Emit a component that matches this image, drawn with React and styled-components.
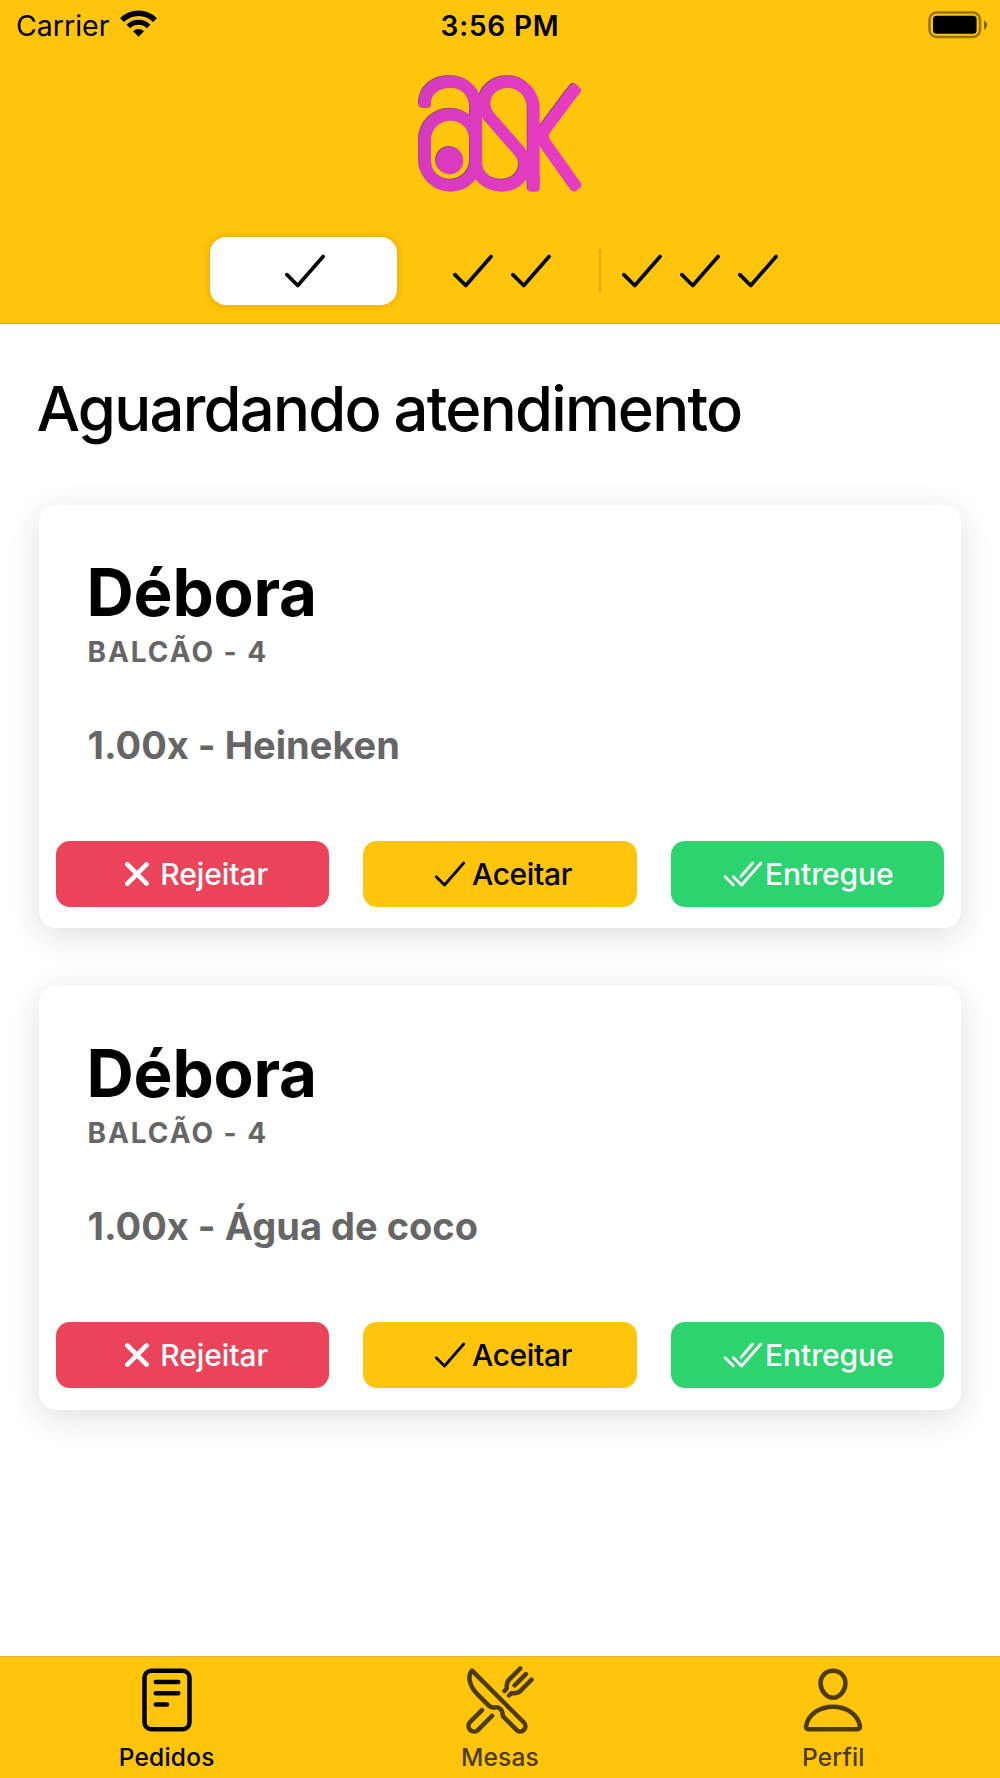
import React from "react";
import styled, { createGlobalStyle } from "styled-components";
import {
  IoCheckmarkOutline,
  IoCheckmarkDoneOutline,
  IoPersonOutline,
  IoReaderOutline,
  IoRestaurantOutline,
} from "react-icons/io5";

const orders = [
  { id: 1, customer: "Débora", table: "BALCÃO - 4", item: "1.00x - Heineken" },
  { id: 2, customer: "Débora", table: "BALCÃO - 4", item: "1.00x - Água de coco" },
];

const Wifi = () => (
  <svg width="37" height="27" viewBox="0 0 111 81">
    <g fill="none" stroke="#000">
      <path d="M6 30.5A70 70 0 0 1 105 30.5" strokeWidth="16.5" />
      <path d="M25 49.5A43 43 0 0 1 86 49.5" strokeWidth="15.5" />
    </g>
    <path d="M39 64A23 23 0 0 1 72 64L55.5 80z" />
  </svg>
);

const Battery = () => (
  <svg width="60" height="28" viewBox="0 0 60 28">
    <rect x="1.5" y="1.5" width="50.5" height="24.5" rx="7" fill="none" stroke="#000" strokeOpacity="0.4" strokeWidth="2.6" />
    <rect x="5" y="4.8" width="43.6" height="18" rx="3.5" />
    <path d="M56 9.5Q59 11 59 14T56 18.7z" fillOpacity="0.5" />
  </svg>
);

const AskLogo = () => (
  <LogoSvg width="200" height="140" viewBox="0 0 600 420">
    <defs>
      <linearGradient id="pink" gradientUnits="userSpaceOnUse" x1="60" y1="0" x2="540" y2="0">
        <stop offset="0" stopColor="#d63abf" />
        <stop offset="1" stopColor="#e83cc2" />
      </linearGradient>
    </defs>
    <g fill="none" stroke="url(#pink)" strokeWidth="36">
      <path d="M75 126C75 90 106 63 150 63C196 63 228 95 228 140V300" />
      <rect x="75" y="161" width="153" height="213" rx="76" />
      <path d="M401 374V142A78 79 0 0 0 323 63C285 63 253 90 253 127C253 145 260 158 270 170L358 270C370 284 375 296 375 310C375 347 345 374 304 374C262 374 228 345 228 300V140" />
      <path d="M515 98L435 205Q422 226 435 246L516 360" />
    </g>
    <g fill="url(#pink)">
      <rect x="57" y="112" width="36" height="29" rx="11" />
      <rect x="383" y="340" width="36" height="52" rx="10" />
      <circle cx="149" cy="299" r="41" />
    </g>
    <g fill="#e63cc2">
      <rect x="-40" y="-18" width="40" height="36" rx="11" transform="translate(533 75) rotate(-53.3)" />
      <rect x="-40" y="-18" width="40" height="36" rx="11" transform="translate(534 385) rotate(54.5)" />
    </g>
  </LogoSvg>
);

const CloseIcon = () => (
  <svg width="24" height="24" viewBox="0 0 24 24">
    <path d="M2.4 2.4L21.6 21.6M21.6 2.4L2.4 21.6" stroke="#fff" strokeWidth="4.6" strokeLinecap="round" />
  </svg>
);

const OrderCard = ({ order }) => (
  <Card>
    <CardBody>
      <Customer>{order.customer}</Customer>
      <Table>{order.table}</Table>
      <Item>{order.item}</Item>
    </CardBody>
    <Actions>
      <ActionButton $bg="#eb445a" $color="#fff" $gap="11px" $indent="8px" $spacing="-0.1px">
        <CloseIcon />
        <span>Rejeitar</span>
      </ActionButton>
      <ActionButton $bg="#ffc40c" $color="#000">
        <IoCheckmarkOutline size={44} />
        <span>Aceitar</span>
      </ActionButton>
      <ActionButton $bg="#2dd36f" $color="#fff" $spacing="-0.1px">
        <IoCheckmarkDoneOutline size={44} />
        <span>Entregue</span>
      </ActionButton>
    </Actions>
  </Card>
);

const App = () => (
  <>
    <GlobalStyle />
    <Screen>
      <Header>
        <StatusBar>
          <Carrier>
            <span>Carrier</span>
            <Wifi />
          </Carrier>
          <Clock>3:56 PM</Clock>
          <BatteryBox>
            <Battery />
          </BatteryBox>
        </StatusBar>
        <LogoBox>
          <AskLogo />
        </LogoBox>
        <Segments>
          <Segment $active>
            <IoCheckmarkOutline size={58} />
          </Segment>
          <Segment>
            <IoCheckmarkOutline size={58} />
            <IoCheckmarkOutline size={58} />
          </Segment>
          <Segment $divider>
            <IoCheckmarkOutline size={58} />
            <IoCheckmarkOutline size={58} />
            <IoCheckmarkOutline size={58} />
          </Segment>
        </Segments>
      </Header>
      <Content>
        <Title>Aguardando atendimento</Title>
        <OrderList>
          {orders.map((order) => (
            <OrderCard key={order.id} order={order} />
          ))}
        </OrderList>
      </Content>
      <TabBar>
        <Tab $active>
          <IoReaderOutline size={72} />
          <span>Pedidos</span>
        </Tab>
        <Tab>
          <IoRestaurantOutline size={72} />
          <span>Mesas</span>
        </Tab>
        <Tab>
          <IoPersonOutline size={72} />
          <span>Perfil</span>
        </Tab>
      </TabBar>
    </Screen>
  </>
);

const GlobalStyle = createGlobalStyle`
  * {
    box-sizing: border-box;
  }

  body {
    margin: 0;
    background: #fff;
    font-family: Inter, "Liberation Sans", sans-serif;
  }

  svg {
    display: block;
    flex-shrink: 0;
  }
`;

const Screen = styled.div`
  display: flex;
  flex-direction: column;
  width: 1000px;
  height: 1778px;
  overflow: hidden;
`;

const Header = styled.header`
  display: flex;
  flex-direction: column;
  height: 324px;
  background: #ffc40c;
  border-bottom: 1px solid #d9a70a;
`;

const StatusBar = styled.div`
  display: grid;
  grid-template-columns: 1fr auto 1fr;
  height: 60px;
  padding: 8px 12px 0;
  line-height: 35px;
`;

const Carrier = styled.div`
  display: flex;
  gap: 11px;
  padding-left: 4px;
  font-size: 28.5px;

  svg {
    margin-top: 2px;
  }
`;

const Clock = styled.div`
  padding-top: 1px;
  font-size: 28px;
  font-weight: 600;
  letter-spacing: 0.8px;
`;

const BatteryBox = styled.div`
  display: flex;
  justify-content: flex-end;
  padding-top: 2.5px;
`;

const LogoBox = styled.div`
  display: flex;
  justify-content: center;
  height: 140px;
`;

const LogoSvg = styled.svg`
  margin-top: 0.5px;
  filter: drop-shadow(-0.5px -0.4px 0.3px rgba(120, 40, 140, 0.75));
`;

const Segments = styled.div`
  display: grid;
  grid-template-columns: repeat(3, 1fr);
  width: 593px;
  height: 68px;
  margin: 36.6px 0 0 206px;
`;

const Segment = styled.div`
  display: flex;
  align-items: center;
  justify-content: center;
  position: relative;

  ${({ $active }) =>
    $active &&
    `
    margin: 0 6.5px 0 3.5px;
    padding-left: 3px;
    background: #fff;
    border-radius: 16px;
    box-shadow: 0 0 8px rgba(0, 0, 0, 0.14);
  `}

  ${({ $divider }) =>
    $divider &&
    `
    &::before {
      content: "";
      position: absolute;
      left: -2px;
      top: 12px;
      width: 2px;
      height: 43px;
      background: #dfab0b;
    }
  `}
`;

const Content = styled.main`
  flex: 1;
  padding: 48px 39px 0;
`;

const Title = styled.h1`
  margin: 0 0 59px -2.5px;
  font-size: 61.5px;
  font-weight: 500;
  line-height: 74px;
  letter-spacing: -1.75px;
  word-spacing: -1px;
  white-space: nowrap;
`;

const OrderList = styled.div`
  display: flex;
  flex-direction: column;
  gap: 58px;
`;

const Card = styled.article`
  height: 423.4px;
  padding: 52px 17px 21px;
  background: #fff;
  border-radius: 17px;
  box-shadow: 0 8px 34px rgba(0, 0, 0, 0.13);
`;

const CardBody = styled.div`
  height: 283.8px;
  padding-left: 32px;
`;

const Customer = styled.h2`
  margin: 0 0 6px -1.5px;
  font-size: 65.5px;
  font-weight: 700;
  line-height: 72px;
  letter-spacing: -0.2px;
`;

const Table = styled.div`
  margin: 0 0 53px -0.5px;
  color: #666;
  font-size: 28px;
  font-weight: 700;
  line-height: 34px;
  letter-spacing: 1.95px;
`;

const Item = styled.div`
  margin-left: -0.5px;
  color: #666;
  font-size: 38px;
  font-weight: 700;
  line-height: 46px;
  letter-spacing: 0.02px;
`;

const Actions = styled.div`
  display: grid;
  grid-template-columns: repeat(3, 1fr);
  gap: 34px;
`;

const ActionButton = styled.button`
  display: flex;
  align-items: center;
  justify-content: center;
  gap: ${({ $gap = "0" }) => $gap};
  height: 66px;
  padding: 0 0 0 ${({ $indent = "0" }) => $indent};
  border: none;
  border-radius: 14px;
  background: ${({ $bg }) => $bg};
  color: ${({ $color }) => $color};
  font-family: inherit;
  font-size: 30px;
  font-weight: 500;
  letter-spacing: ${({ $spacing = "-0.35px" }) => $spacing};
`;

const TabBar = styled.nav`
  display: grid;
  grid-template-columns: repeat(3, 1fr);
  height: 122px;
  background: #ffc40c;
  border-top: 1px solid #d9b03a;
`;

const Tab = styled.div`
  display: flex;
  flex-direction: column;
  align-items: center;
  padding-top: 7px;
  color: ${({ $active }) => ($active ? "#000" : "#4c3b04")};
  font-size: 24.5px;
  font-weight: 500;
  line-height: 30px;
  letter-spacing: 0.2px;

  span {
    margin-top: 6px;
  }
`;

export default App;
